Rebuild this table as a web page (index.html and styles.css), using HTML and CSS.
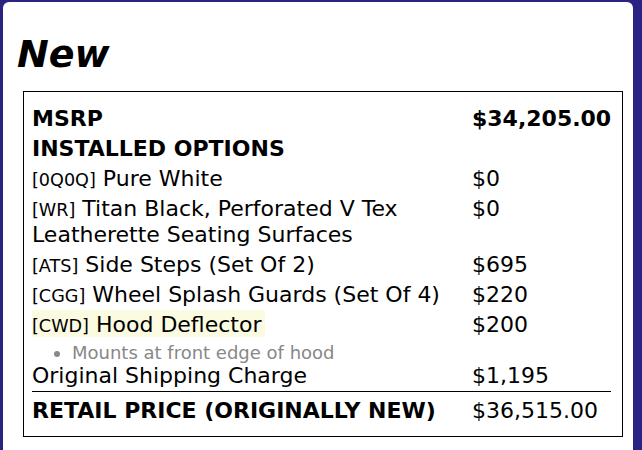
FILE: index.html
```html
<!DOCTYPE html>
<html lang="en">
<head>
<meta charset="utf-8">
<title>New - Price</title>
<link rel="stylesheet" href="styles.css">
</head>
<body>
<div class="card">
  <h1 class="title">New</h1>
  <div class="price-box">
    <table class="price-table">
      <colgroup><col class="col-label"><col class="col-amount"></colgroup>
      <tr class="row-strong"><td>MSRP</td><td class="amount">$34,205.00</td></tr>
      <tr class="row-strong"><td colspan="2">INSTALLED OPTIONS</td></tr>
      <tr><td><span class="code">[0Q0Q]</span> Pure White</td><td class="amount">$0</td></tr>
      <tr><td><span class="code">[WR]</span> Titan Black, Perforated V Tex Leatherette Seating Surfaces</td><td class="amount">$0</td></tr>
      <tr><td><span class="code">[ATS]</span> Side Steps (Set Of 2)</td><td class="amount">$695</td></tr>
      <tr><td><span class="code">[CGG]</span> Wheel Splash Guards (Set Of 4)</td><td class="amount">$220</td></tr>
      <tr><td><span class="highlight"><span class="code">[CWD]</span> Hood Deflector</span></td><td class="amount">$200</td></tr>
      <tr class="row-note"><td colspan="2"><ul class="notes"><li>Mounts at front edge of hood</li></ul></td></tr>
      <tr class="row-after-note"><td>Original Shipping Charge</td><td class="amount">$1,195</td></tr>
      <tr class="row-total"><td class="total-label">RETAIL PRICE (ORIGINALLY NEW)</td><td class="amount">$36,515.00</td></tr>
    </table>
  </div>
</div>
</body>
</html>
```

FILE: styles.css
```css
html, body {
  margin: 0;
  padding: 0;
}

body {
  height: 450px;
  overflow: hidden;
  background: #2b2384;
  font-family: "DejaVu Sans", Verdana, sans-serif;
  color: #000;
}

.card {
  margin: 2px 9px 0 3px;
  min-height: 448px;
  background: #fff;
  border-radius: 6px 6px 0 0;
  padding: 0 0 0 13px;
  box-sizing: border-box;
  overflow: hidden;
}

.title {
  margin: 31px 0 16px 1px;
  font-size: 38px;
  line-height: 42px;
  font-weight: bold;
  font-style: italic;
}

.price-box {
  width: 600px;
  box-sizing: border-box;
  margin-left: 7px;
  border: 1px solid #000;
  padding: 12px 11px 10px 8px;
}

.price-table {
  width: 100%;
  table-layout: fixed;
  border-collapse: separate;
  border-spacing: 0;
  font-size: 22px;
  line-height: 26px;
}

.col-label {
  width: 440px;
}

.price-table td {
  padding: 2px 0;
  vertical-align: top;
}

.amount {
  white-space: nowrap;
}

.row-strong td {
  font-weight: bold;
}

.code {
  font-size: 17.6px;
  line-height: 18px;
}

.highlight {
  background: #fbfbe1;
  padding: 2px 4px 0 0;
}

.row-note td {
  padding: 3px 0 0 0;
}

.notes {
  margin: 0;
  padding-left: 40px;
  font-size: 18px;
  line-height: 20px;
  color: #888;
}

.row-after-note td {
  padding-top: 0;
}

.row-total td {
  border-top: 1px solid #000;
  padding-top: 6px;
}

.total-label {
  font-weight: bold;
}
```
